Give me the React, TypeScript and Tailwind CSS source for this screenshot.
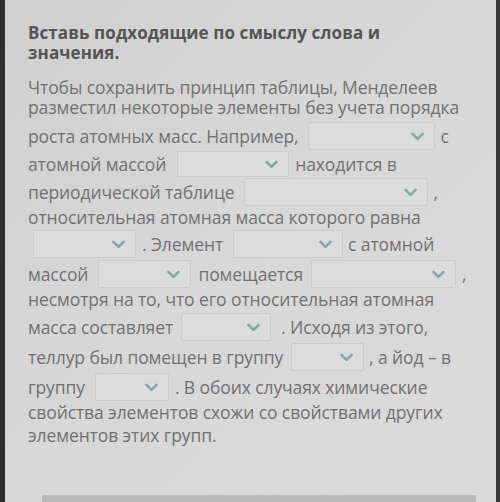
import React from "react";

function Chevron() {
  return (
    <svg width="13" height="9" viewBox="0 0 13 9" className="shrink-0">
      <path d="M1.5 1.8 L6.5 6.8 L11.5 1.8" fill="none" stroke="#86a8a5" strokeWidth="2.6" strokeLinecap="round" strokeLinejoin="round" />
    </svg>
  );
}

function Dd({ w, h = "h-[28px]" }: { w: string; h?: string }) {
  return (
    <span className={`${w} ${h} inline-flex items-center justify-end pr-[10px] bg-[#dcdcdc] border border-[#cbcbcb] rounded-[2px] shrink-0`}>
      <Chevron />
    </span>
  );
}

export default function App() {
  return (
    <div className="w-[500px] h-[502px] flex bg-[#d5d5d5] overflow-hidden" style={{ fontFamily: '"Open Sans", "Noto Sans", sans-serif' }}>
      <div className="w-[5px] bg-[#2f2f2f]" />
      <div className="flex-1 flex flex-col bg-gradient-to-br from-[#d0d0d0] via-[#d8d8d8] to-[#dadada]">
        <div className="flex-1 pl-[23px] pt-[23px] text-[17.5px] leading-[20px] text-[#717171] tracking-[-0.1px]">
          <div className="h-[20px] flex items-center font-bold text-[17px] text-[#555555] tracking-[0.1px] whitespace-nowrap">Вставь подходящие по смыслу слова и</div>
          <div className="h-[20px] flex items-center font-bold text-[17px] text-[#555555] tracking-[0.1px]">значения.</div>
          <div className="mt-[14px] h-[20px] flex items-center whitespace-nowrap">Чтобы сохранить принцип таблицы, Менделеев</div>
          <div className="h-[20px] flex items-center whitespace-nowrap">разместил некоторые элементы без учета порядка</div>
          <div className="mt-[4px] h-[30px] flex items-center whitespace-nowrap">
            <span>роста атомных масс. Например,</span>
            <span className="ml-[10px]"><Dd w="w-[127px]" /></span>
            <span className="ml-[5px]">с</span>
          </div>
          <div className="h-[26px] flex items-center whitespace-nowrap">
            <span>атомной массой</span>
            <span className="ml-[11px]"><Dd w="w-[112px]" h="h-[26px]" /></span>
            <span className="ml-[6px]">находится в</span>
          </div>
          <div className="h-[30px] flex items-center whitespace-nowrap">
            <span>периодической таблице</span>
            <span className="ml-[10px]"><Dd w="w-[184px]" /></span>
            <span className="ml-[5px]">,</span>
          </div>
          <div className="h-[20px] flex items-center whitespace-nowrap">относительная атомная масса которого равна</div>
          <div className="mt-[2px] h-[30px] flex items-center whitespace-nowrap">
            <span className="ml-[5px]"><Dd w="w-[103px]" /></span>
            <span className="ml-[6px]">. Элемент</span>
            <span className="ml-[10px]"><Dd w="w-[110px]" /></span>
            <span className="ml-[5px]">с атомной</span>
          </div>
          <div className="h-[30px] flex items-center whitespace-nowrap">
            <span>массой</span>
            <span className="ml-[10px]"><Dd w="w-[93px]" /></span>
            <span className="ml-[7px]">помещается</span>
            <span className="ml-[8px]"><Dd w="w-[145px]" /></span>
            <span className="ml-[6px]">,</span>
          </div>
          <div className="h-[20px] flex items-center whitespace-nowrap">несмотря на то, что его относительная атомная</div>
          <div className="mt-[3px] h-[30px] flex items-center whitespace-nowrap">
            <span>масса составляет</span>
            <span className="ml-[8px]"><Dd w="w-[90px]" /></span>
            <span className="ml-[10px]">. Исходя из этого,</span>
          </div>
          <div className="h-[30px] flex items-center whitespace-nowrap">
            <span>теллур был помещен в группу</span>
            <span className="ml-[8px]"><Dd w="w-[73px]" /></span>
            <span className="ml-[5px]">, а йод – в</span>
          </div>
          <div className="h-[30px] flex items-center whitespace-nowrap">
            <span>группу</span>
            <span className="ml-[10px]"><Dd w="w-[74px]" /></span>
            <span className="ml-[6px]">. В обоих случаях химические</span>
          </div>
          <div className="h-[20px] flex items-center whitespace-nowrap">свойства элементов схожи со свойствами других</div>
          <div className="mt-[3px] h-[20px] flex items-center whitespace-nowrap">элементов этих групп.</div>
        </div>
        <div className="h-[7px] mx-[37px] mr-[20px] bg-[#b9b9b9] rounded-t-[2px]" />
      </div>
      <div className="w-[4px] bg-[#3a3a3a]" />
    </div>
  );
}
